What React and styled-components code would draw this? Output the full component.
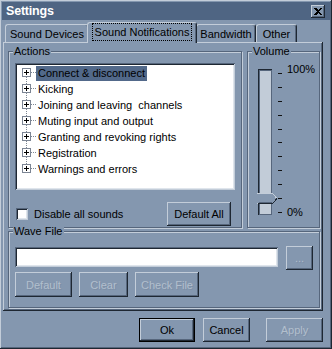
import styled, { createGlobalStyle } from 'styled-components';

const c = {
  face: '#8497af',
  light: '#c3cdd9',
  shadow: '#56667c',
  dark: '#1e2732',
  title: '#4f6583',
  track: '#c2ccd8',
  select: '#52698a',
};

const GlobalStyle = createGlobalStyle`
  html, body {
    margin: 0;
    padding: 0;
    background: ${c.face};
  }
  body {
    font-family: "Liberation Sans", Arial, sans-serif;
    font-size: 11px;
    color: #000;
  }
  * {
    box-sizing: border-box;
  }
`;

const raised = `
  box-shadow: inset -1px -1px 0 ${c.dark}, inset 1px 1px 0 ${c.light},
    inset -2px -2px 0 ${c.shadow};
`;

const sunken = `
  box-shadow: inset 1px 1px 0 ${c.shadow}, inset -1px -1px 0 ${c.light},
    inset 2px 2px 0 ${c.dark}, inset -2px -2px 0 #dfe5ec;
`;

const Window = styled.div`
  width: 332px;
  height: 349px;
  padding: 2px;
  background: ${c.face};
  display: flex;
  flex-direction: column;
  ${raised}
`;

const TitleBar = styled.div`
  height: 18px;
  background: ${c.title};
  display: flex;
  align-items: center;
  justify-content: space-between;
  padding: 0 5px 0 4px;
`;

const Title = styled.span`
  color: #fff;
  font-weight: bold;
  font-size: 12.5px;
  letter-spacing: -0.2px;
`;

const CloseButton = styled.button`
  width: 14px;
  height: 13px;
  margin-top: 1px;
  padding: 0;
  border: none;
  background: ${c.face};
  display: flex;
  align-items: center;
  justify-content: center;
  ${raised}
`;

const Body = styled.div`
  padding: 2px 7px 0 1px;
  display: flex;
  flex-direction: column;
`;

const TabStrip = styled.div`
  height: 21px;
  margin-bottom: -1px;
  padding-left: 2px;
  display: flex;
  align-items: flex-end;
  position: relative;
  z-index: 1;
`;

const Tab = styled.div`
  width: ${(p) => p.$w}px;
  height: ${(p) => (p.$active ? 21 : 18)}px;
  margin: ${(p) => (p.$active ? '0 -1px 0 -2px' : '0 0 1px 0')};
  position: relative;
  z-index: ${(p) => (p.$active ? 2 : 1)};
  background: ${c.face};
  border-top: 1px solid ${c.light};
  border-left: 1px solid ${c.light};
  border-right: 1px solid ${c.dark};
  border-radius: 3px 3px 0 0;
  box-shadow: inset -1px 0 0 ${c.shadow};
  display: flex;
  align-items: center;
  justify-content: center;
  padding-bottom: ${(p) => (p.$active ? 2 : 0)}px;
  white-space: nowrap;
`;

const Focus = styled.span`
  outline: 1px dotted #000;
  outline-offset: 0;
  padding: 2px 2px;
  line-height: 12px;
`;

const Panel = styled.div`
  height: 269px;
  padding: 9px 3px 3px 5px;
  background: ${c.face};
  display: flex;
  flex-direction: column;
  gap: 3px;
  ${raised}
`;

const TopRow = styled.div`
  display: flex;
  gap: 5px;
  height: 177px;
`;

const Group = styled.div`
  position: relative;
  width: ${(p) => p.$w}px;
  height: ${(p) => p.$h}px;
  border: 1px solid ${c.shadow};
  box-shadow: inset 1px 1px 0 ${c.light}, 1px 1px 0 ${c.light};
  display: flex;
  flex-direction: ${(p) => p.$dir || 'column'};
  padding: ${(p) => p.$pad};
`;

const Legend = styled.span`
  position: absolute;
  top: -7px;
  left: 4px;
  padding: 0 1px;
  background: ${c.face};
  line-height: 13px;
`;

const ListBox = styled.div`
  height: 127px;
  background: #fff;
  padding: 2px;
  ${sunken}
`;

const TreeRow = styled.div`
  height: 16px;
  display: flex;
  align-items: center;
  padding-left: 5px;
`;

const TreeLabel = styled.span`
  height: 15px;
  line-height: 15px;
  padding: 0 2px;
  white-space: pre;
  background: ${(p) => (p.$selected ? c.select : 'transparent')};
`;

const ActionsFoot = styled.div`
  margin-top: 12px;
  height: 24px;
  display: flex;
  align-items: center;
  justify-content: space-between;
  padding: 0 4px 0 1px;
`;

const CheckLabel = styled.label`
  display: flex;
  align-items: center;
  gap: 6px;
`;

const CheckBox = styled.span`
  width: 12px;
  height: 12px;
  background: #fff;
  ${sunken}
`;

const Button = styled.button`
  width: ${(p) => p.$w}px;
  height: ${(p) => p.$h || 24}px;
  margin-left: ${(p) => p.$ml || 0}px;
  padding: 0;
  border: none;
  background: ${c.face};
  font-family: inherit;
  font-size: 11px;
  color: ${(p) => (p.disabled ? '#b2bfcd' : '#000')};
  text-shadow: ${(p) => (p.disabled ? `1px 1px 0 #7d8fa7` : 'none')};
  ${raised}
  ${(p) =>
    p.$default &&
    `box-shadow: inset 0 0 0 1px #000, inset -2px -2px 0 ${c.dark},
      inset 2px 2px 0 ${c.light}, inset -3px -3px 0 ${c.shadow};`}
`;

const TrackWrap = styled.div`
  position: relative;
  width: 14px;
  height: 146px;
`;

const Track = styled.div`
  width: 14px;
  height: 146px;
  background: ${c.track};
  box-shadow: inset 1px 1px 0 ${c.dark}, inset 2px 2px 0 ${c.shadow},
    inset -1px -1px 0 ${c.shadow};
`;

const Thumb = styled.svg`
  position: absolute;
  left: -1px;
  top: 124px;
`;

const Scale = styled.div`
  margin: 4px 0 0 6px;
  height: 140px;
  display: flex;
  flex-direction: column;
  justify-content: space-between;
`;

const TickRow = styled.div`
  height: 1px;
  display: flex;
  align-items: center;
  gap: 5px;
`;

const Tick = styled.span`
  width: 4px;
  height: 1px;
  background: #111;
`;

const TickLabel = styled.span`
  line-height: 11px;
  margin-bottom: ${(p) => (p.$raise ? 9 : 0)}px;
`;

const Row = styled.div`
  display: flex;
  align-items: flex-start;
  gap: ${(p) => p.$gap || 7}px;
  margin-top: ${(p) => p.$mt || 0}px;
`;

const TextInput = styled.div`
  width: 264px;
  height: 20px;
  margin-top: 1px;
  background: #fff;
  ${sunken}
`;

const Footer = styled.div`
  margin-top: 7px;
  display: flex;
  justify-content: flex-end;
`;

const actions = [
  'Connect & disconnect',
  'Kicking',
  'Joining and leaving  channels',
  'Muting input and output',
  'Granting and revoking rights',
  'Registration',
  'Warnings and errors',
];

function TreeGlyph({ first, last }) {
  return (
    <svg width="14" height="16" shapeRendering="crispEdges">
      <line x1="4.5" y1={first ? 8 : 0} x2="4.5" y2={last ? 8 : 16} stroke="#7f8894" strokeDasharray="1 1" />
      <line x1="9" y1="7.5" x2="14" y2="7.5" stroke="#7f8894" strokeDasharray="1 1" />
      <rect x="0.5" y="3.5" width="8" height="8" fill="#fff" stroke="#7c8594" />
      <line x1="2" y1="7.5" x2="7" y2="7.5" stroke="#000" />
      <line x1="4.5" y1="5" x2="4.5" y2="10" stroke="#000" />
    </svg>
  );
}

export default function App() {
  const ticks = Array.from({ length: 11 }, (_, i) => i);
  return (
    <>
      <GlobalStyle />
      <Window>
        <TitleBar>
          <Title>Settings</Title>
          <CloseButton aria-label="Close">
            <svg width="8" height="7" shapeRendering="crispEdges">
              <path d="M0 0h2l2 2 2-2h2L5 3.5 8 7H6L4 5 2 7H0l3-3.5z" fill="#000" />
            </svg>
          </CloseButton>
        </TitleBar>
        <Body>
          <TabStrip>
            <Tab $w={84}>Sound Devices</Tab>
            <Tab $w={110} $active>
              <Focus>Sound Notifications</Focus>
            </Tab>
            <Tab $w={60}>Bandwidth</Tab>
            <Tab $w={41}>Other</Tab>
          </TabStrip>
          <Panel>
            <TopRow>
              <Group $w={234} $h={177} $pad="11px 6px 0 6px">
                <Legend>Actions</Legend>
                <ListBox>
                  {actions.map((a, i) => (
                    <TreeRow key={a}>
                      <TreeGlyph first={i === 0} last={i === actions.length - 1} />
                      <TreeLabel $selected={i === 0}>{a}</TreeLabel>
                    </TreeRow>
                  ))}
                </ListBox>
                <ActionsFoot>
                  <CheckLabel>
                    <CheckBox />
                    Disable all sounds
                  </CheckLabel>
                  <Button $w={64} $h={24}>Default All</Button>
                </ActionsFoot>
              </Group>
              <Group $w={73} $h={177} $dir="row" $pad="17px 0 0 10px">
                <Legend>Volume</Legend>
                <TrackWrap>
                  <Track />
                  <Thumb width="21" height="11" shapeRendering="crispEdges">
                    <path d="M0.5 10.5V0.5H15.5L20 5.5" fill="none" stroke={c.light} />
                    <path d="M0 1h15l4 4.5-4 4.5H0z" fill={c.face} />
                    <path d="M0.5 10.5H15.5L20 5.5" fill="none" stroke={c.dark} />
                    <path d="M1.5 9.5H15" fill="none" stroke={c.shadow} />
                  </Thumb>
                </TrackWrap>
                <Scale>
                  {ticks.map((t) => (
                    <TickRow key={t}>
                      <Tick />
                      {t === 0 && <TickLabel $raise>100%</TickLabel>}
                      {t === 10 && <TickLabel>0%</TickLabel>}
                    </TickRow>
                  ))}
                </Scale>
              </Group>
            </TopRow>
            <Group $w={312} $h={77} $pad="14px 6px 0 6px">
              <Legend>Wave File</Legend>
              <Row $gap={8}>
                <TextInput />
                <Button $w={27} $h={24} disabled>...</Button>
              </Row>
              <Row $mt={2}>
                <Button $w={57} $h={25} disabled>Default</Button>
                <Button $w={49} $h={25} disabled>Clear</Button>
                <Button $w={64} $h={25} disabled>Check File</Button>
              </Row>
            </Group>
          </Panel>
          <Footer>
            <Button $w={56} $default>Ok</Button>
            <Button $w={47} $ml={8}>Cancel</Button>
            <Button $w={57} $ml={16} disabled>Apply</Button>
          </Footer>
        </Body>
      </Window>
    </>
  );
}
